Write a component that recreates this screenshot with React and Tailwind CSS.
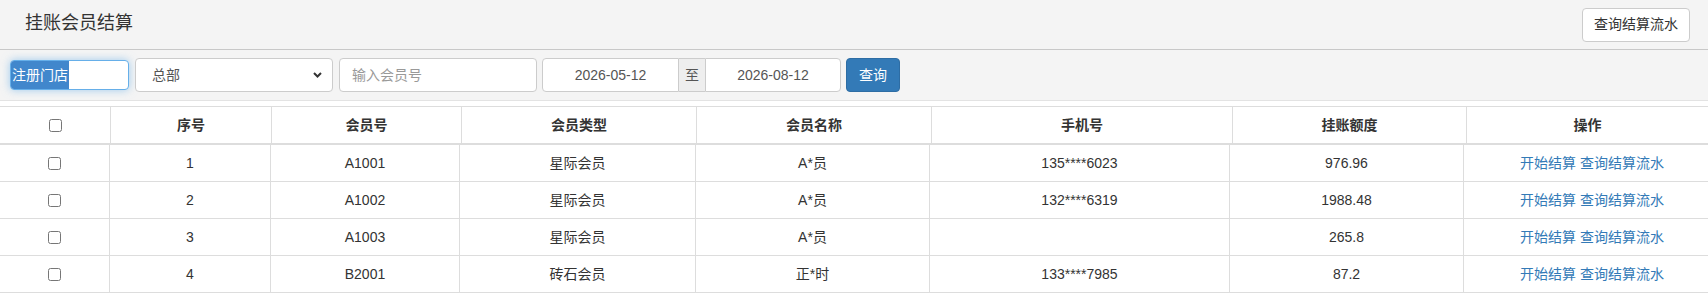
import { useState } from 'react';

const headCols = [111, 161, 190, 235, 235, 301, 234, 241];
const bodyCols = [110, 161, 189, 236, 234, 300, 234, 256];
const heads = ['序号', '会员号', '会员类型', '会员名称', '手机号', '挂账额度', '操作'];

const rows = [
  { no: 1, code: 'A1001', type: '星际会员', name: 'A*员', phone: '135****6023', limit: '976.96' },
  { no: 2, code: 'A1002', type: '星际会员', name: 'A*员', phone: '132****6319', limit: '1988.48' },
  { no: 3, code: 'A1003', type: '星际会员', name: 'A*员', phone: '', limit: '265.8' },
  { no: 4, code: 'B2001', type: '砖石会员', name: '正*时', phone: '133****7985', limit: '87.2' },
];

export default function App() {
  const [checked, setChecked] = useState({});
  const [startDate] = useState('2026-05-12');
  const [endDate] = useState('2026-08-12');

  return (
    <div className="w-[1708px] h-[304px] bg-white text-[#333] font-['Liberation_Sans','Noto_Sans_CJK_SC',sans-serif] overflow-hidden">
      {/* Top area */}
      <div className="bg-[#f4f4f4] border-b border-[#e3e3e3]">
        <div className="h-[50px] flex items-center justify-between pl-[25px] pr-[18px] border-b border-[#c8c8c8]">
          <h1 className="text-[18px] leading-[24px] font-normal text-[#333] -mt-[4px]">挂账会员结算</h1>
          <button className="h-[34px] w-[108px] bg-white border border-[#ccc] rounded-[4px] text-[14px] text-[#333]">
            查询结算流水
          </button>
        </div>

        {/* Filters */}
        <div className="h-[50px] flex items-center pl-[10px]">
          <div className="w-[119px] h-[30px] bg-white border border-[#66afe9] rounded-[4px] shadow-[0_0_8px_rgba(102,175,233,0.6)] flex items-stretch overflow-hidden">
            <span className="bg-[#4187cc] text-white text-[14px] leading-[28px] pl-[1px] pr-[1px]">注册门店</span>
          </div>

          <div className="ml-[6px] w-[198px] h-[34px] bg-white border border-[#ccc] rounded-[4px] flex items-center justify-between pl-[16px] pr-[10px]">
            <span className="text-[14px] text-[#555]">总部</span>
            <svg width="9" height="6" viewBox="0 0 9 6">
              <path d="M1 1 L4.5 4.5 L8 1" fill="none" stroke="#333" strokeWidth="2" />
            </svg>
          </div>

          <div className="ml-[6px] w-[198px] h-[34px] bg-white border border-[#ccc] rounded-[4px] flex items-center pl-[12px]">
            <span className="text-[14px] text-[#999]">输入会员号</span>
          </div>

          <div className="ml-[5px] h-[34px] flex">
            <div className="w-[137px] bg-white border border-[#ccc] rounded-l-[4px] flex items-center justify-center text-[14px] text-[#555]">
              {startDate}
            </div>
            <div className="w-[26px] bg-[#eee] border-y border-[#ccc] flex items-center justify-center text-[14px] text-[#555]">
              至
            </div>
            <div className="w-[136px] bg-white border border-[#ccc] rounded-r-[4px] flex items-center justify-center text-[14px] text-[#555]">
              {endDate}
            </div>
          </div>

          <button className="ml-[5px] w-[54px] h-[34px] bg-[#337ab7] border border-[#2e6da4] rounded-[4px] text-white text-[14px]">
            查询
          </button>
        </div>
      </div>

      {/* Table header */}
      <table className="mt-[5px] table-fixed border-separate border-spacing-0 w-[1708px] border-t border-[#ddd]">
        <colgroup>
          {headCols.map((w, i) => (
            <col key={i} style={{ width: w }} />
          ))}
        </colgroup>
        <thead>
          <tr>
            <th className="h-[38px] border-b-2 border-r border-[#ddd] align-middle">
              <input type="checkbox" className="w-[13px] h-[13px] align-middle" />
            </th>
            {heads.map((h, i) => (
              <th
                key={h}
                className={`h-[38px] border-b-2 border-[#ddd] text-[14px] font-bold text-[#333] align-middle ${i < heads.length - 1 ? 'border-r' : ''}`}
              >
                {h}
              </th>
            ))}
          </tr>
        </thead>
      </table>

      {/* Table body (a little wider than the page, clipped on the right) */}
      <table className="table-fixed border-separate border-spacing-0 w-[1720px] min-w-[1720px]">
        <colgroup>
          {bodyCols.map((w, i) => (
            <col key={i} style={{ width: w }} />
          ))}
        </colgroup>
        <tbody>
          {rows.map((r) => (
            <tr key={r.no} className="text-[14px] text-[#333] text-center">
              <td className="h-[37px] border-b border-r border-[#ddd] align-middle">
                <input
                  type="checkbox"
                  checked={!!checked[r.no]}
                  onChange={() => setChecked({ ...checked, [r.no]: !checked[r.no] })}
                  className="w-[13px] h-[13px] align-middle"
                />
              </td>
              <td className="border-b border-r border-[#ddd]">{r.no}</td>
              <td className="border-b border-r border-[#ddd]">{r.code}</td>
              <td className="border-b border-r border-[#ddd]">{r.type}</td>
              <td className="border-b border-r border-[#ddd]">{r.name}</td>
              <td className="border-b border-r border-[#ddd]">{r.phone}</td>
              <td className="border-b border-r border-[#ddd]">{r.limit}</td>
              <td className="border-b border-[#ddd] text-[#337ab7]">
                <a href="#" className="text-[#337ab7]">开始结算</a>{' '}
                <a href="#" className="text-[#337ab7]">查询结算流水</a>
              </td>
            </tr>
          ))}
        </tbody>
      </table>
    </div>
  );
}
